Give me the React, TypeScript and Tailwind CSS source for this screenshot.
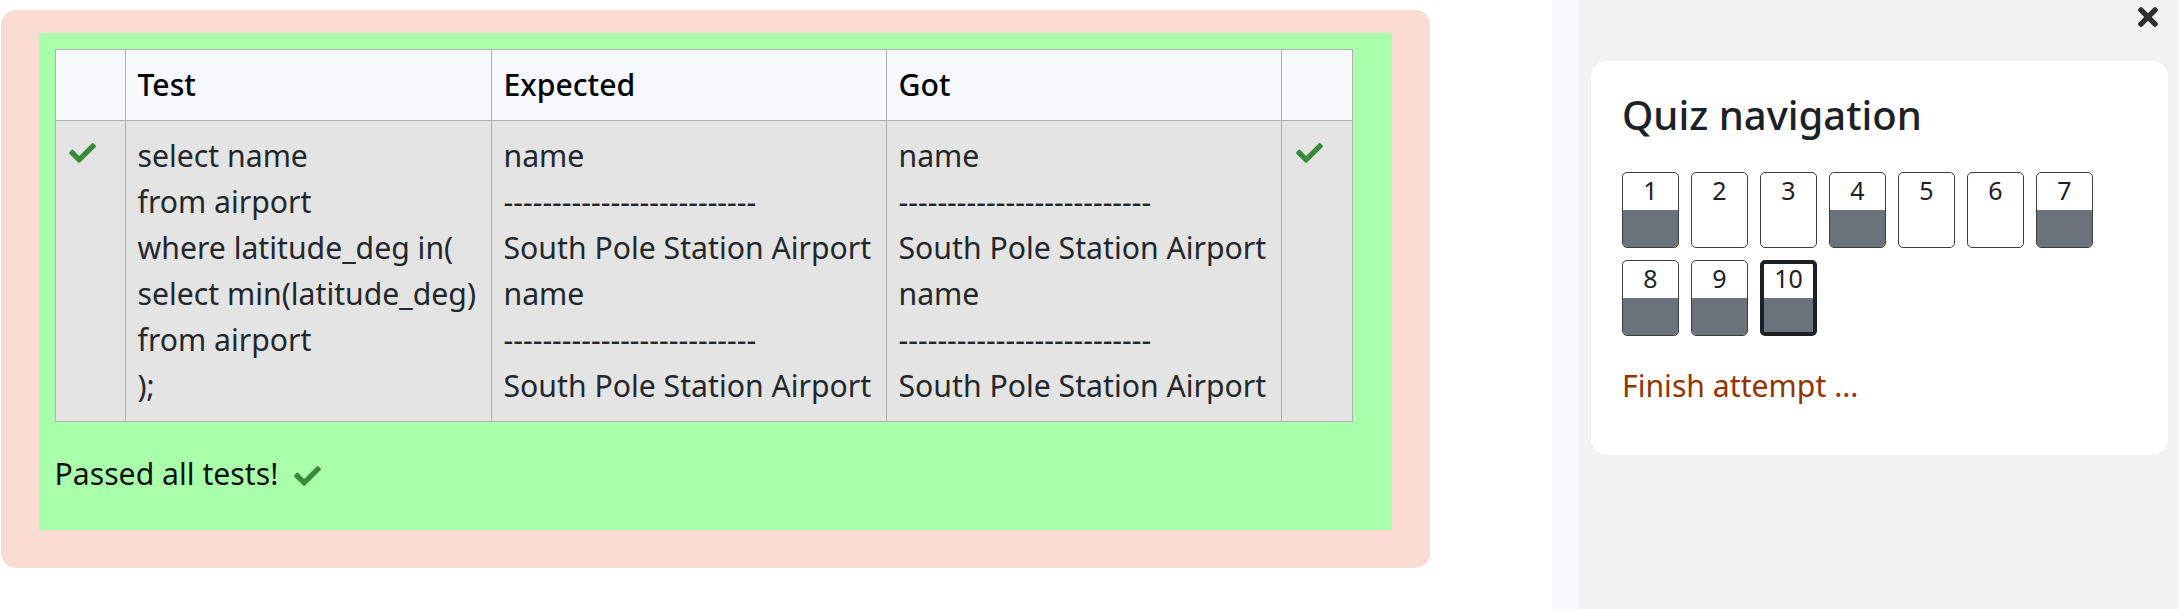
import React from 'react';

const CHECK_PATH =
  'M173.898 439.404l-166.4-166.4c-9.997-9.997-9.997-26.206 0-36.204l36.203-36.204c9.997-9.998 26.207-9.998 36.204 0L192 312.69 432.095 72.596c9.997-9.997 26.207-9.997 36.204 0l36.203 36.204c9.997 9.997 9.997 26.206 0 36.204l-294.4 294.401c-9.998 9.997-26.207 9.997-36.204-.001z';

const TIMES_PATH =
  'M242.72 256l100.07-100.07c12.28-12.28 12.28-32.19 0-44.48l-22.24-22.24c-12.28-12.28-32.19-12.28-44.48 0L176 189.28 75.93 89.21c-12.28-12.28-32.19-12.28-44.48 0L9.21 111.45c-12.28 12.28-12.28 32.19 0 44.48L109.28 256 9.21 356.07c-12.28 12.28-12.28 32.19 0 44.48l22.24 22.24c12.28 12.28 32.2 12.28 44.48 0L176 322.72l100.07 100.07c12.28 12.28 32.2 12.28 44.48 0l22.24-22.24c12.28-12.28 12.28-32.19 0-44.48L242.72 256z';

const Check = ({ className = '' }: { className?: string }) => (
  <svg viewBox="0 65 512 382" className={`w-[27px] h-[20px] fill-[#3a8a3a] ${className}`}>
    <path d={CHECK_PATH} />
  </svg>
);

const testLines = [
  'select name',
  'from airport',
  'where latitude_deg in(',
  'select min(latitude_deg)',
  'from airport',
  ');',
];

const dashes = '--------------------------';
const outputLines = ['name', dashes, 'South Pole Station Airport', 'name', dashes, 'South Pole Station Airport'];

// answered = grey lower half
const questions = [
  { n: 1, answered: true },
  { n: 2, answered: false },
  { n: 3, answered: false },
  { n: 4, answered: true },
  { n: 5, answered: false },
  { n: 6, answered: false },
  { n: 7, answered: true },
  { n: 8, answered: true },
  { n: 9, answered: true },
  { n: 10, answered: true, current: true },
];

const Lines = ({ lines }: { lines: string[] }) => (
  <>
    {lines.map((l, i) => (
      <div key={i} className="whitespace-nowrap">{l}</div>
    ))}
  </>
);

function ResultTable() {
  const cell = 'border border-[#b0b0b0] p-3 align-top';
  const head = `${cell} font-medium text-left`;
  return (
    <table className="table-fixed border-collapse w-[1297px]">
      <colgroup>
        <col className="w-[70px]" />
        <col className="w-[366px]" />
        <col className="w-[395px]" />
        <col className="w-[395px]" />
        <col className="w-[71px]" />
      </colgroup>
      <thead>
        <tr className="bg-[#f7f8fc] text-black">
          <th className={head}></th>
          <th className={head}>Test</th>
          <th className={head}>Expected</th>
          <th className={head}>Got</th>
          <th className={head}></th>
        </tr>
      </thead>
      <tbody>
        <tr className="bg-[#e4e4e4] text-[#23272b]">
          <td className={cell}>
            <Check className="mt-[10px] ml-[1px]" />
          </td>
          <td className={cell}>
            <Lines lines={testLines} />
          </td>
          <td className={cell}>
            <Lines lines={outputLines} />
          </td>
          <td className={cell}>
            <Lines lines={outputLines} />
          </td>
          <td className={cell}>
            <Check className="mt-[10px] ml-[2px]" />
          </td>
        </tr>
      </tbody>
    </table>
  );
}

function QuizNav() {
  return (
    <div className="w-[577px] bg-white rounded-[16px] pt-[30px] pl-[31px] pb-[46px]">
      <h3 className="text-[40px] leading-[1.2] font-medium text-[#1d2125] -mt-[0.5px]">Quiz navigation</h3>
      <div className="mt-[33px] grid grid-cols-[repeat(7,57px)] gap-x-[12px] gap-y-[12px]">
        {questions.map((q) => (
          <div
            key={q.n}
            className={`h-[76px] flex flex-col overflow-hidden rounded-[5px] bg-white ${
              q.current ? 'border-[4.5px] border-[#1d2125]' : 'border-[1.5px] border-[#3d3d3d]'
            }`}
          >
            <div className={`flex-1 flex justify-center text-[25px] leading-[30px] text-[#1d2125] ${q.current ? '-mt-[1px]' : 'pt-[2px]'}`}>
              {q.n}
            </div>
            {q.answered && <div className={`${q.current ? 'h-[34px]' : 'h-[37px]'} bg-[#6a737b]`}></div>}
          </div>
        ))}
      </div>
      <div className="mt-[27px] text-[#933400] leading-[46px]">Finish attempt ...</div>
    </div>
  );
}

export default function App() {
  return (
    <div className="flex w-[2179px] h-[609px] bg-white font-['Noto_Sans','Open_Sans',sans-serif] text-[30.2px] leading-[46px] overflow-hidden">
      <main className="w-[1552px] shrink-0 pl-[1px] pt-[10px]">
        <div className="w-[1429px] rounded-[15px] bg-[#fbdcd2] pt-[23px] px-[38px] pb-[38px]">
          <div className="bg-[#aaffaa] pt-[16px] pl-[15.5px] pb-[33px]">
            <ResultTable />
            <div className="mt-[29px] flex items-center gap-[16px] text-[#111]">
              <span>Passed all tests!</span>
              <Check className="mt-[3px]" />
            </div>
          </div>
        </div>
      </main>
      <div className="w-[27px] shrink-0 bg-[#f8f9fa]"></div>
      <aside className="flex-1 bg-[#f2f2f2] pl-[12px]">
        <div className="h-[61px] flex justify-end items-start pt-[7px] pr-[21px]">
          <svg viewBox="0 80 352 352" className="w-[20px] h-[20px] fill-[#2f2f2f]">
            <path d={TIMES_PATH} />
          </svg>
        </div>
        <QuizNav />
      </aside>
    </div>
  );
}
